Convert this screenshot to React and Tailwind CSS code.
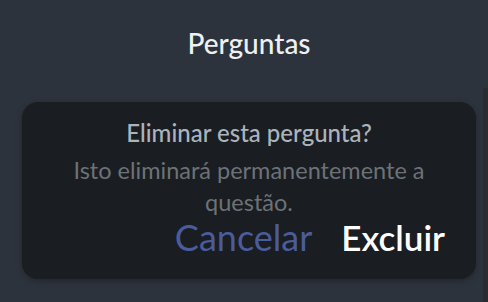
import React from 'react';

export default function App() {
  return (
    <div className="w-[488px] h-[302px] bg-[#2d333c] flex overflow-hidden" style={{ fontFamily: 'Lato, "Open Sans", sans-serif' }}>
      <div className="flex-1 flex flex-col pl-[22px] pr-[7px]">
        <h1 className="pt-[25px] h-[102px] text-center text-[28px] leading-[36px] font-medium text-[#eef0f2]">Perguntas</h1>
        <div className="h-[177px] rounded-[16px] bg-[#1a1d21] shadow-[0_2px_6px_rgba(0,0,0,0.25)] flex flex-col items-center pt-[15px] px-[24px]">
          <h2 className="text-[24px] leading-[32px] font-medium text-[#aab4bd]">Eliminar esta pergunta?</h2>
          <p className="mt-[5px] text-center text-[23.5px] leading-[32px] text-[#6c7277]">Isto eliminará permanentemente a questão.</p>
          <div className="self-end flex items-center gap-[29px] pr-[7px] -mt-[1px]">
            <button className="text-[36px] leading-[40px] text-[#4b5c9c]">Cancelar</button>
            <button className="text-[35px] leading-[40px] font-semibold text-white">Excluir</button>
          </div>
        </div>
      </div>
      <div className="w-[5px] mt-[88px] bg-[#2a2c30]" />
    </div>
  );
}
